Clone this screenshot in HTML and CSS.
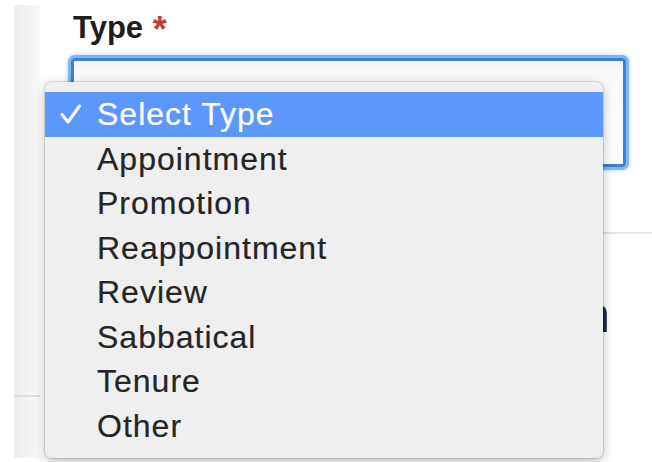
FILE: index.html
```html
<!DOCTYPE html>
<html lang="en">
<head>
<meta charset="utf-8">
<title>Type</title>
<link rel="stylesheet" href="styles.css">
</head>
<body>
<div class="page">
  <aside class="rail"><div class="rail-rule"></div></aside>
  <main class="form">
    <div class="field">
      <label class="label">Type <span class="req">*</span></label>
      <div class="select"></div>
    </div>
    <hr class="rule">
    <div class="row"><span class="peek">n</span></div>
  </main>

  <ul class="menu" role="listbox">
    <li class="opt selected">
      <svg class="check" width="24" height="24" viewBox="0 0 24 24" aria-hidden="true">
        <polyline points="3,12.5 9,20 20.5,4" fill="none" stroke="#ffffff" stroke-width="3" stroke-linecap="round" stroke-linejoin="round"/>
      </svg>Select Type
    </li>
    <li class="opt">Appointment</li>
    <li class="opt">Promotion</li>
    <li class="opt">Reappointment</li>
    <li class="opt">Review</li>
    <li class="opt">Sabbatical</li>
    <li class="opt">Tenure</li>
    <li class="opt">Other</li>
  </ul>
</div>
</body>
</html>
```

FILE: styles.css
```css
html, body {
  margin: 0;
  padding: 0;
  background: #ffffff;
}

.page {
  position: relative;
  width: 652px;
  height: 462px;
  overflow: hidden;
  display: flex;
  padding: 5px 0 4px 14px;
  box-sizing: border-box;
  font-family: "Liberation Sans", Arial, sans-serif;
}

/* grey strip down the left */
.rail {
  width: 26px;
  flex: none;
  background: linear-gradient(to right, #ececec, #f4f4f4 60%, #fafafa);
}

.rail-rule {
  margin-top: 390px;
  height: 2px;
  background: #dedede;
}

.form {
  flex: 1;
  display: flex;
  flex-direction: column;
  padding-left: 31px;
}

.field {
  display: flex;
  flex-direction: column;
}

.label {
  font-weight: bold;
  font-size: 31px;
  line-height: 34px;
  color: #1e1e1e;
  margin-left: 2px;
  margin-top: 6px;
}

.req {
  color: #c53935;
  font-size: 36px;
  line-height: 20px;
  vertical-align: -4px;
  margin-left: 1px;
}

.select {
  margin-top: 13px;
  width: 549px;
  height: 103px;
  border: 3px solid #3f80cc;
  border-radius: 4px;
  background: linear-gradient(#f3f3f3, #fbfbfb 18px, #ffffff);
  box-shadow: 0 0 0 3px rgba(110, 176, 242, 0.85), 0 0 3px 4px rgba(140, 195, 250, 0.5);
}

.rule {
  margin: 65px 0 0 0;
  border: 0;
  height: 2px;
  background: #e6e6e6;
}

/* text row sitting beneath the open popup */
.row {
  display: flex;
  justify-content: flex-end;
  width: 539px;
  margin-top: 56px;
}

.peek {
  font-size: 50px;
  line-height: 50px;
  color: #1d2a48;
}

/* native-style options popup */
.menu {
  position: absolute;
  left: 45px;
  top: 82px;
  width: 558px;
  height: 376px;
  margin: 0;
  padding: 10px 0 0 0;
  box-sizing: border-box;
  list-style: none;
  background: #efefef;
  border-radius: 7px;
  box-shadow: 0 0 0 1px rgba(0, 0, 0, 0.1), 0 3px 12px rgba(0, 0, 0, 0.28);
}

.opt {
  position: relative;
  height: 44.5px;
  line-height: 44.5px;
  padding-left: 52px;
  font-size: 32px;
  letter-spacing: 1px;
  color: #252525;
  -webkit-text-stroke: 0.2px #252525;
}

.opt.selected {
  background: #5c97fb;
  color: #ffffff;
  -webkit-text-stroke: 0.2px #ffffff;
}

.check {
  position: absolute;
  left: 14px;
  top: 10px;
}
```
